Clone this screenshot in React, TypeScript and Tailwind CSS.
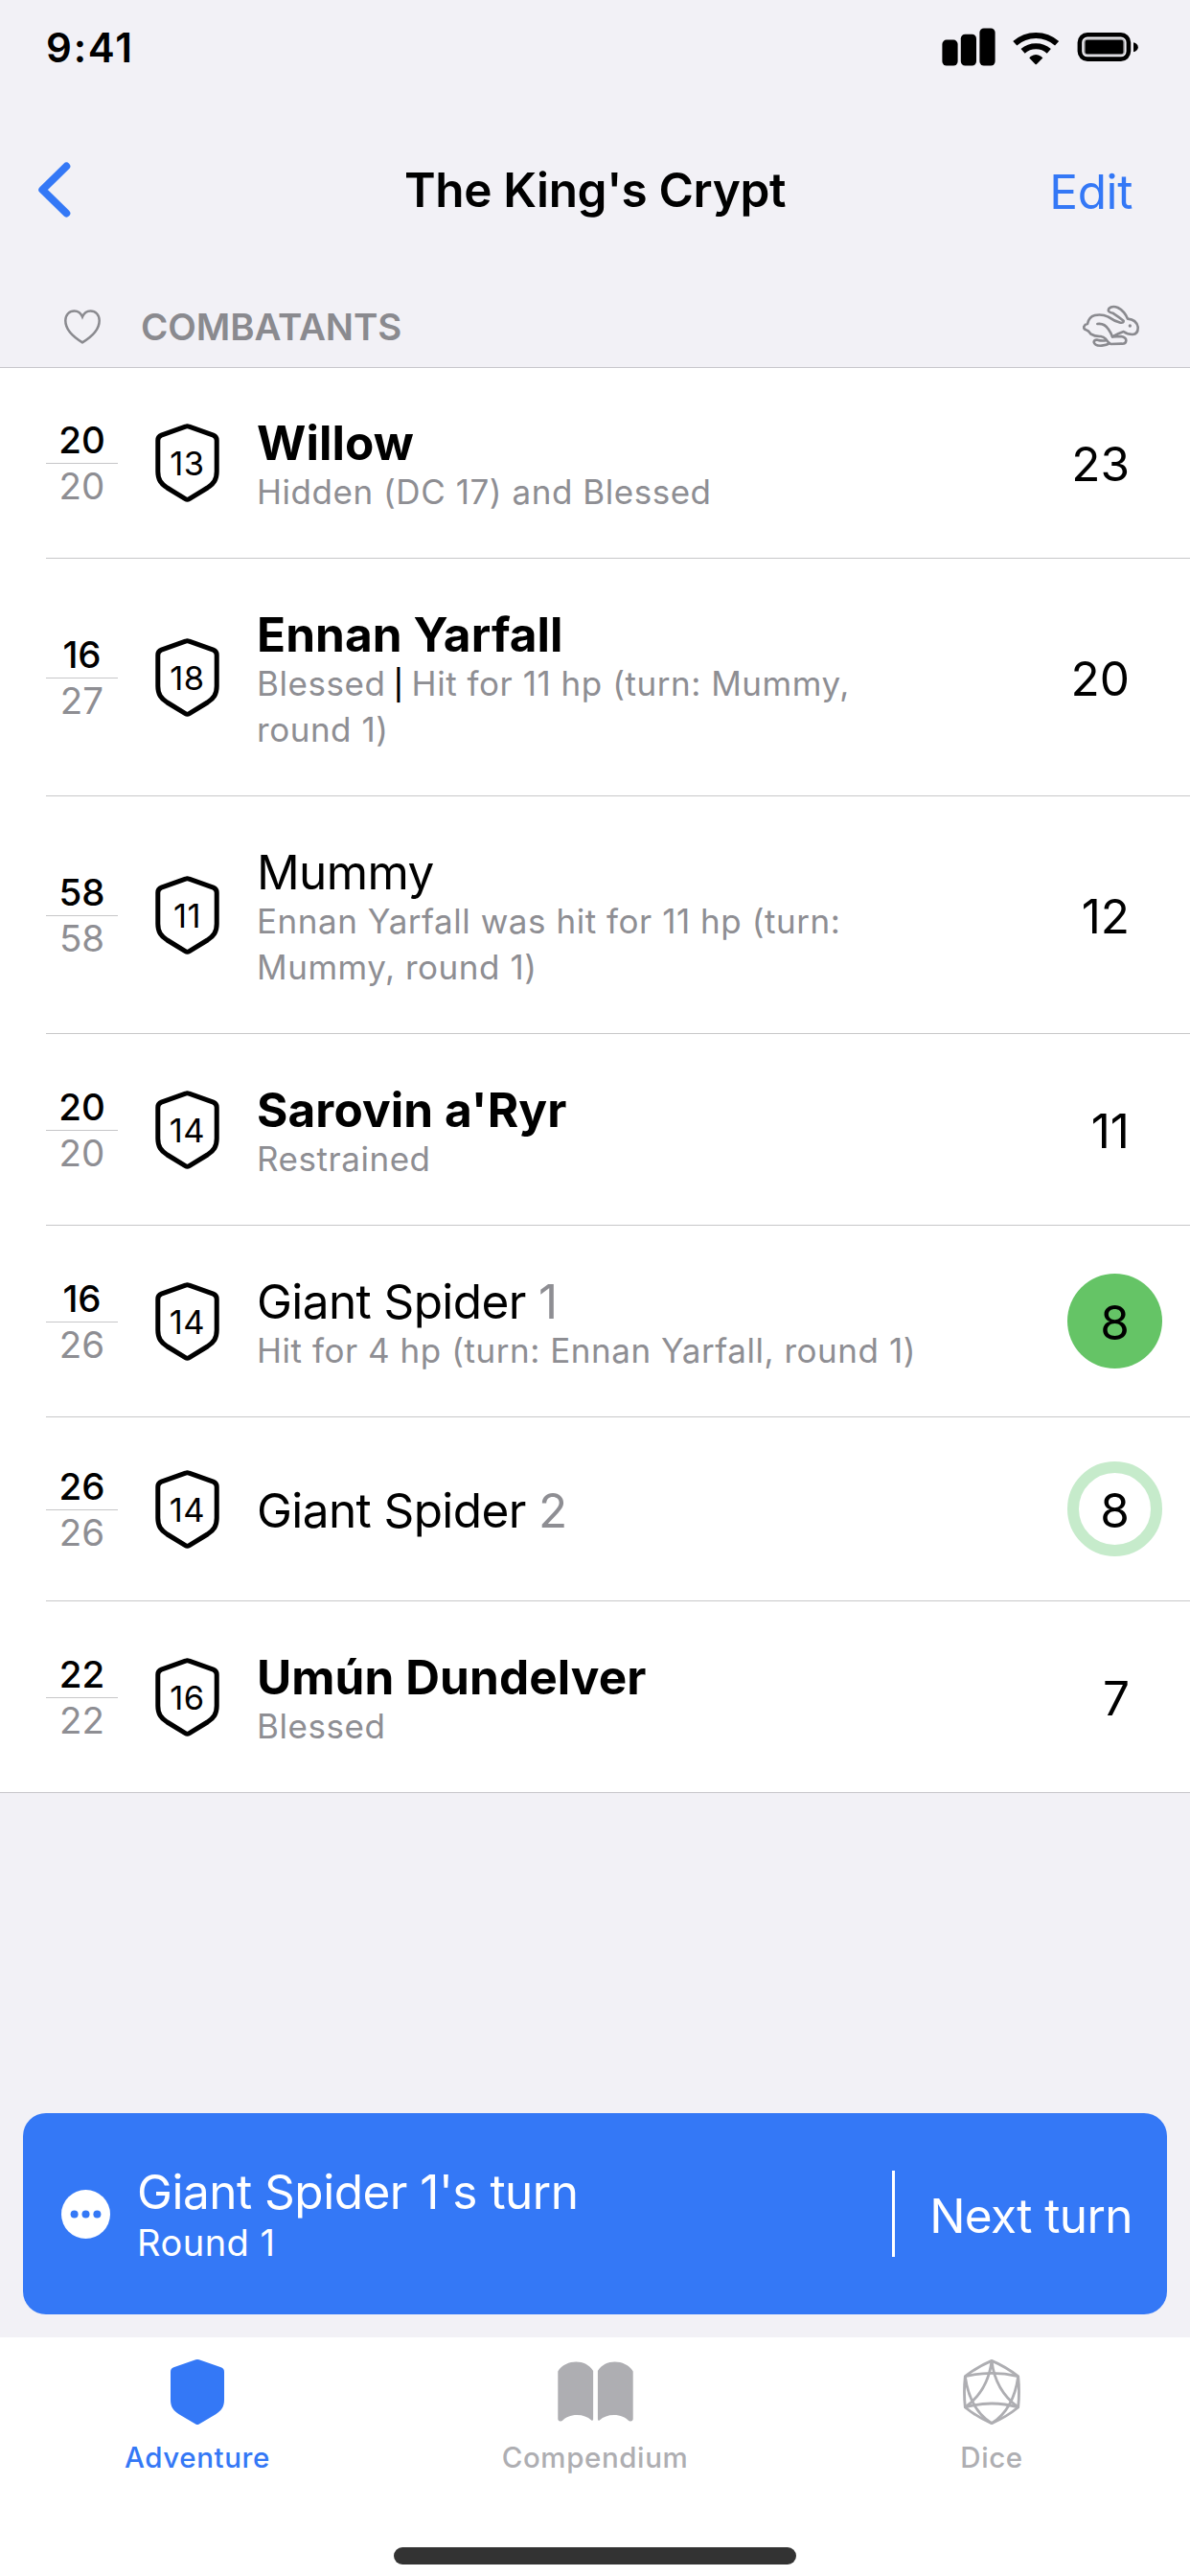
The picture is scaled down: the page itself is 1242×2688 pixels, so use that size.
import React from "react";

type Combatant = {
  name: string;
  suffix?: string;
  player?: boolean;
  hp: number;
  maxHp: number;
  ac: number;
  notes?: string[];
  initiative: number;
  turn?: "current" | "next";
};

const combatants: Combatant[] = [
  { name: "Willow", player: true, hp: 20, maxHp: 20, ac: 13, notes: ["Hidden (DC 17) and Blessed"], initiative: 23 },
  { name: "Ennan Yarfall", player: true, hp: 16, maxHp: 27, ac: 18, notes: ["Blessed", "Hit for 11 hp (turn: Mummy, round 1)"], initiative: 20 },
  { name: "Mummy", hp: 58, maxHp: 58, ac: 11, notes: ["Ennan Yarfall was hit for 11 hp (turn: Mummy, round 1)"], initiative: 12 },
  { name: "Sarovin a'Ryr", player: true, hp: 20, maxHp: 20, ac: 14, notes: ["Restrained"], initiative: 11 },
  { name: "Giant Spider", suffix: "1", hp: 16, maxHp: 26, ac: 14, notes: ["Hit for 4 hp (turn: Ennan Yarfall, round 1)"], initiative: 8, turn: "current" },
  { name: "Giant Spider", suffix: "2", hp: 26, maxHp: 26, ac: 14, initiative: 8, turn: "next" },
  { name: "Umún Dundelver", player: true, hp: 22, maxHp: 22, ac: 16, notes: ["Blessed"], initiative: 7 },
];

const SHIELD =
  "M31.6 3.2 Q33.5 2.4 35.4 3.2 L60.6 12.2 Q64.2 13.6 64.2 17.5 V50 C64.2 58.5 61 62.8 54.5 67 L35.5 78.6 Q33.5 79.8 31.5 78.6 L12.5 67 C6 62.8 2.8 58.5 2.8 50 V17.5 Q2.8 13.6 6.4 12.2 Z";

function StatusIcons() {
  return (
    <svg className="h-[42px] w-[206px]" viewBox="983 28 206 42">
      <rect x="983.4" y="41.6" width="16.2" height="27" rx="4.5" />
      <rect x="1002.8" y="35.8" width="16.2" height="32.8" rx="4.5" />
      <rect x="1022.4" y="29.4" width="16.2" height="39.2" rx="4.5" />
      <g fill="none" stroke="#000" strokeWidth="6.2">
        <path d="M1059.3 45.3 A33 33 0 0 1 1103.1 45.3" />
        <path d="M1067.6 53.4 A20.5 20.5 0 0 1 1094.8 53.4" />
      </g>
      <path d="M1074.3 60.6 Q1074.6 59.6 1076 58.7 Q1081.2 55.4 1086.4 58.7 Q1087.8 59.6 1088.3 60.6 L1081.9 66.9 Q1081.2 67.5 1080.5 66.9 Z" />
      <rect x="1126.9" y="36.2" width="51" height="25.4" rx="8" fill="none" stroke="#000" strokeWidth="4.6" />
      <rect x="1131" y="40.2" width="43" height="17.4" rx="4" fill="#a9a8ac" />
      <rect x="1132.6" y="41.8" width="39.8" height="14.4" rx="2" />
      <path d="M1183 44.2 Q1187.8 45.5 1187.8 49.2 Q1187.8 52.9 1183 54.2 Z" />
    </svg>
  );
}

function Heart() {
  return (
    <svg className="h-[36px] w-[38px]" viewBox="0 0 38 36" fill="none" stroke="#8a8a8f" strokeWidth="2.5" strokeLinejoin="miter">
      <path d="M19 7.6 C17.3 3.6 14 1.4 10.6 1.4 C5.2 1.4 1.3 5.6 1.3 11.6 C1.3 20.6 9 28.4 19 34.4 C29 28.4 36.7 20.6 36.7 11.6 C36.7 5.6 32.8 1.4 27.4 1.4 C24 1.4 20.7 3.6 19 7.6 Z" />
    </svg>
  );
}

function Rabbit() {
  return (
    <svg className="h-[45px] w-[60px]" viewBox="60 54 180 135" fill="none" stroke="#8a8a8f" strokeWidth="7.8" strokeLinecap="round" strokeLinejoin="round">
      <path d="M117 153 Q98 154 86 146 Q78 135 71 133 Q62 130 64 122 Q67 115 75 114 Q79 92 98 87 Q120 82 140 92 Q158 105 178 110 Q189 112 188 104 Q172 92 154 80 Q136 77 142 66 Q152 56 170 63 Q190 73 201 98 Q228 100 233 124 Q234 146 216 147 Q200 147 188 138 Q170 144 153 154 L180 153 Q196 156 196 166 Q195 177 182 176 L148 177 Q138 171 132 161 Q125 154 117 153" />
      <path d="M106 114 Q128 111 140 130 Q149 143 153 154" />
      <path d="M133 166 Q118 168 106 164 Q96 163 95 171 Q98 184 120 182 Q136 181 143 175" />
      <circle cx="208" cy="120" r="5" fill="#8a8a8f" stroke="none" />
    </svg>
  );
}

function Shield({ value }: { value: number }) {
  return (
    <div className="ml-[39px] grid h-[82px] w-[67px] shrink-0 place-items-center">
      <svg className="col-start-1 row-start-1 h-[82px] w-[67px]" viewBox="0 0 67 82" fill="none" stroke="#000" strokeWidth="5" strokeLinejoin="round">
        <path d={SHIELD} />
      </svg>
      <span className="col-start-1 row-start-1 pt-[3px] text-[34.5px] leading-[40px] tracking-[0.5px]">{value}</span>
    </div>
  );
}

function Initiative({ value, turn }: { value: number; turn?: "current" | "next" }) {
  if (turn === "current")
    return <div className="flex size-[99px] items-center justify-center rounded-full bg-[#65c466] pt-[3px]">{value}</div>;
  if (turn === "next")
    return <div className="flex size-[99px] items-center justify-center rounded-full border-[12px] border-[#c6ebcb] pt-[3px]">{value}</div>;
  return <div className="w-[99px] pt-[3px] pr-[34px] text-right">{value}</div>;
}

function Row({ c }: { c: Combatant }) {
  return (
    <li className="ml-12 flex items-center border-b border-[#c7c7c9] pr-[29px] first:-mt-px last:border-b-0">
      <div className="w-[75px] shrink-0 pt-[2px] text-center text-[38.5px]">
        <div className="leading-[48px] font-medium">{c.hp}</div>
        <div className="border-t border-[#c6c6c8] pb-[2px] leading-[46px] text-[#8e8e93]">{c.maxHp}</div>
      </div>
      <Shield value={c.ac} />
      <div className={c.notes ? "ml-[39px] flex-1 py-[49px] pr-[138px]" : "ml-[39px] flex-1 pt-[67px] pb-[63px]"}>
        <div
          className={
            c.player
              ? "text-[49.5px] leading-[61px] font-bold tracking-[0.1px]"
              : "text-[49.5px] leading-[61px] tracking-[-0.6px]"
          }
        >
          {c.name}
          {c.suffix && <span className="text-[#8e8e93]"> {c.suffix}</span>}
        </div>
        {c.notes && (
          <div className="-my-1 text-[35px] leading-[48px] tracking-[0.54px] text-[#8e8e93]">
            {c.notes.map((note, i) => (
              <React.Fragment key={note}>
                {i > 0 && <span className="text-[31px] leading-none font-medium tracking-normal text-black"> | </span>}
                {note}
              </React.Fragment>
            ))}
          </div>
        )}
      </div>
      <div className="-my-4 text-[49.5px] leading-[60px]">
        <Initiative value={c.initiative} turn={c.turn} />
      </div>
    </li>
  );
}

function ShieldTabIcon() {
  return (
    <svg className="h-[68px] w-[56px]" viewBox="2.8 2.8 61.4 76.4" preserveAspectRatio="none" fill="currentColor">
      <path d={SHIELD} />
    </svg>
  );
}

function BookTabIcon() {
  const page =
    "M0 10 C4 3 12 0 19 0 C26 0 33 3 36.8 9.5 V60 Q36.5 61.8 35 61 C31 57.5 26 55.6 20 55.6 C13 55.6 8 58 4.5 61.5 Q0.6 63 0 60 Z";
  return (
    <svg className="h-[68px] w-[79px]" viewBox="0 -2.5 78.4 68" fill="currentColor">
      <path d={page} />
      <path d={page} transform="translate(78.4 0) scale(-1 1)" />
    </svg>
  );
}

function DiceTabIcon() {
  return (
    <svg className="h-[68px] w-[60px]" viewBox="43 33 180 204" fill="none" stroke="currentColor" strokeWidth="8.5" strokeLinejoin="round">
      <path d="M133 37 Q178 56 216 86 Q221 134 216 183 Q178 214 133 233 Q88 214 50 183 Q45 134 50 86 Q88 56 133 37 Z" />
      <path d="M50 86 Q133 66 216 86" />
      <path d="M50 183 Q133 159 216 183" />
      <path d="M133 37 Q144 130 216 183" />
      <path d="M133 37 Q122 130 50 183" />
      <path d="M216 86 Q202 190 133 233" />
      <path d="M50 86 Q64 190 133 233" />
    </svg>
  );
}

function Tab({ icon, label, active }: { icon: React.ReactNode; label: string; active?: boolean }) {
  return (
    <div className={active ? "flex flex-col items-center pt-[23px] pr-[2px] text-[#3478f6]" : "flex flex-col items-center pt-[23px] text-[#aeaeb2]"}>
      {icon}
      <span className="mt-[16px] text-[29.5px] leading-[36px] font-medium tracking-[0.6px]">{label}</span>
    </div>
  );
}

export default function App() {
  return (
    <div className="flex h-[2688px] w-[1242px] flex-col overflow-hidden bg-[#f2f1f6] font-['Inter',sans-serif] text-black">
      <div className="flex h-[98px] items-center justify-between pr-[53px] pl-[48px]">
        <span className="pt-px text-[42px] leading-none font-semibold tracking-[1.8px]">9:41</span>
        <StatusIcons />
      </div>

      <header className="grid h-[200px] grid-cols-[1fr_auto_1fr] items-center px-[39px]">
        <svg className="h-[58px] w-[35px]" viewBox="0 0 35 58" fill="none" stroke="#3478f6" strokeWidth="8" strokeLinecap="round" strokeLinejoin="round">
          <path d="M30.3 4.5 L5.3 29 L30.3 53.5" />
        </svg>
        <h1 className="text-[49.5px] leading-[60px] font-semibold tracking-[-0.38px]">The King's Crypt</h1>
        <span className="pt-[3px] pr-[21px] text-right text-[49.5px] leading-[60px] tracking-[-0.4px] text-[#3478f6]">Edit</span>
      </header>

      <div className="flex h-[86px] items-center border-b border-[#c7c6cb] pr-[52px] pl-[67px]">
        <Heart />
        <span className="ml-[42px] flex-1 text-[38.5px] leading-[48px] font-semibold tracking-[-0.1px] text-[#8a8a8f]">COMBATANTS</span>
        <Rabbit />
      </div>

      <ul className="border-b border-[#c7c6cb] bg-white">
        {combatants.map((c, i) => (
          <Row key={i} c={c} />
        ))}
      </ul>

      <div className="flex-1" />

      <div className="mx-6 mb-6 flex h-[210px] items-center rounded-3xl bg-[#3478f6] pr-[36px] pl-[40px] text-white">
        <svg className="size-[51px]" viewBox="0 0 51 51">
          <circle cx="25.5" cy="25.5" r="25.5" fill="#fff" />
          <g fill="#3478f6">
            <circle cx="13.6" cy="25.5" r="4" />
            <circle cx="25.5" cy="25.5" r="4" />
            <circle cx="37.4" cy="25.5" r="4" />
          </g>
        </svg>
        <div className="ml-[28px] flex-1 pt-px">
          <div className="text-[49.5px] leading-[60px] tracking-[-0.5px]">Giant Spider 1's turn</div>
          <div className="-mt-px text-[38px] leading-[48px] tracking-[0.5px]">Round 1</div>
        </div>
        <div className="h-[90px] w-[3px] bg-white" />
        <span className="ml-[36px] pt-[3px] text-[49.5px] leading-[60px] tracking-[-0.6px]">Next turn</span>
      </div>

      <nav className="flex h-[249px] flex-col justify-between bg-white pb-3">
        <div className="grid grid-cols-3">
          <Tab icon={<ShieldTabIcon />} label="Adventure" active />
          <Tab icon={<BookTabIcon />} label="Compendium" />
          <Tab icon={<DiceTabIcon />} label="Dice" />
        </div>
        <div className="h-[18px] w-[420px] self-center rounded-full bg-[#333333]" />
      </nav>
    </div>
  );
}
